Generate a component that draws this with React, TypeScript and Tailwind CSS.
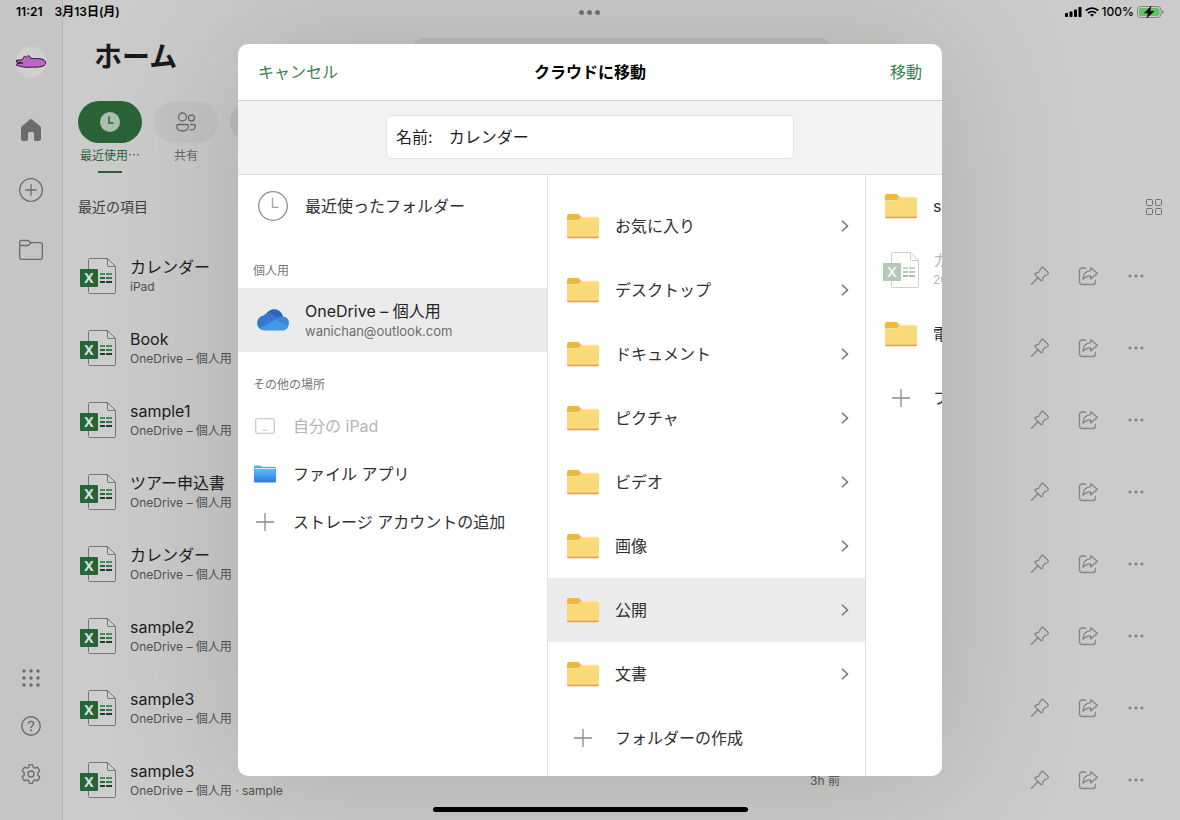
import React, { useState } from "react";

interface FileItem {
  id: number;
  name: string;
  place: string;
  time?: string;
}

const files: FileItem[] = [
  { id: 1, name: "カレンダー", place: "iPad" },
  { id: 2, name: "Book", place: "OneDrive – 個人用" },
  { id: 3, name: "sample1", place: "OneDrive – 個人用" },
  { id: 4, name: "ツアー申込書", place: "OneDrive – 個人用" },
  { id: 5, name: "カレンダー", place: "OneDrive – 個人用" },
  { id: 6, name: "sample2", place: "OneDrive – 個人用" },
  { id: 7, name: "sample3", place: "OneDrive – 個人用" },
  { id: 8, name: "sample3", place: "OneDrive – 個人用 · sample", time: "3h 前" },
];

const folders = [
  "お気に入り",
  "デスクトップ",
  "ドキュメント",
  "ピクチャ",
  "ビデオ",
  "画像",
  "公開",
  "文書",
];

const ExcelIcon = () => (
  <svg className="h-9 w-9 shrink-0" viewBox="0 0 36 36" fill="none">
    <path
      d="M9.5 .5H27.5L35.500 8.500V34.500a1 1 0 0 1-1 1H9.500a1 1 0 0 1-1-1V1.500a1 1 0 0 1 1-1Z"
      fill="#fff"
      fillOpacity=".06"
      stroke="#757575"
    />
    <path d="M27.500 .5V7.500a1 1 0 0 0 1 1H35.500" stroke="#757575" />
    <rect y="11" width="18" height="18" rx="1" fill="#2a6337" />
    <path d="M20 15h5v2h-5zM26 15h6v2h-6z" fill="#41915b" />
    <path d="M20 19h5v2h-5z" fill="#2a6337" />
    <path d="M26 19h6v2h-6z" fill="#377a4c" />
    <path d="M20 23h5v2h-5zM26 23h6v2h-6z" fill="#1d3d27" />
    <text x="9" y="25" textAnchor="middle" className="fill-[#dbe2dd] text-[14px] font-bold font-['Open_Sans',sans-serif]">
      X
    </text>
  </svg>
);

const FolderIcon = () => (
  <svg className="h-[26px] w-8" viewBox="0 0 32 26">
    <path d="M0 2.500A1.500 1.500 0 0 1 1.500 1H11.500L15 4.200 12 8H0Z" fill="#f3b93e" />
    <path
      d="M0 7.500H10.500c1 0 1.600-.3 2.200-.9L15 4.200H30.500A1.500 1.500 0 0 1 32 5.700V23.500A1.500 1.500 0 0 1 30.500 25H1.500A1.500 1.500 0 0 1 0 23.500Z"
      fill="#f9d978"
    />
    <path
      d="M0 7.500H10.500c1 0 1.600-.3 2.200-.9L15 4.200H31"
      stroke="#fceab0"
      strokeWidth=".8"
      fill="none"
    />
    <path d="M0 23.800H32A1.500 1.500 0 0 1 30.500 25.200H1.500A1.500 1.500 0 0 1 0 23.800Z" fill="#e29a5a" />
  </svg>
);

const PlusIcon = () => (
  <svg className="h-[18px] w-[18px]" viewBox="0 0 18 18">
    <path d="M9 0V18M0 9H18" stroke="#8a8a8a" strokeWidth="1.300" />
  </svg>
);

const StatusBar = () => (
  <header className="absolute inset-x-0 top-0 z-20 grid grid-cols-3 items-center px-4 pt-1 text-xs font-semibold leading-4 text-black">
    <div className="flex gap-3">
      <span>11:21</span>
      <span>3月13日(月)</span>
    </div>
    <div className="flex justify-center gap-[3px]">
      <i className="h-[5px] w-[5px] rounded-full bg-[#6f706f]" />
      <i className="h-[5px] w-[5px] rounded-full bg-[#6f706f]" />
      <i className="h-[5px] w-[5px] rounded-full bg-[#6f706f]" />
    </div>
    <div className="flex items-center justify-end gap-[3px] font-medium">
      <svg className="h-[10px] w-[17px]" viewBox="0 0 17 10">
        <rect y="6" width="3" height="4" rx=".8" />
        <rect x="4.500" y="4.500" width="3" height="5.500" rx=".8" />
        <rect x="9" y="2.500" width="3" height="7.500" rx=".8" />
        <rect x="13.500" width="3" height="10" rx=".8" />
      </svg>
      <svg className="h-[10px] w-[14px]" viewBox="0 0 14 10" fill="none" stroke="#000" strokeWidth="1.800">
        <path d="M.7 3.600C4.300 .2 9.700 .2 13.300 3.600" />
        <path d="M3 6.100C5.300 4 8.700 4 11 6.100" />
        <path d="M7 9.800 4.900 7.700C6.100 6.700 7.900 6.700 9.100 7.700Z" fill="#000" stroke="none" />
      </svg>
      <span>100%</span>
      <svg className="h-3 w-[27px]" viewBox="0 0 27 12">
        <rect x=".5" y=".5" width="23.500" height="11" rx="3.300" fill="none" stroke="#858585" />
        <rect x="2" y="2" width="20.500" height="8" rx="2" fill="#5fc466" />
        <path d="M25.300 4v4c.9-.3 1.500-1.100 1.500-2s-.6-1.700-1.500-2Z" fill="#858585" />
        <path d="M14 .2 7.500 7H11.500L9.700 11.900 17 5.200H12.900Z" stroke="#000" strokeWidth=".5" />
      </svg>
    </div>
  </header>
);

const Sidebar = () => (
  <nav className="flex w-[63px] shrink-0 flex-col items-center border-r border-[#b3b3b3] bg-[#c5c5c5] pb-[22px] pt-[46px] text-[#6b6b6b]">
    <button type="button" aria-label="アカウント" className="mb-[22px] h-8 w-8">
      <svg className="h-8 w-8" viewBox="0 0 32 32">
        <circle cx="16" cy="16" r="15.500" fill="#cfcfcf" />
        <path
          d="M1.500 14.200 7 13.800 8.500 12.500C8 10.500 10 9.500 11.500 11.500 12.500 9 15.500 9.500 15.500 12.200 20 13.200 24 12 28 13.500 31.500 15 31.500 18.500 28 20 24 21.800 18 20.800 14 21.300 10 21.500 5 20.500 1.500 19.200L2 17.500 8 17 1.500 16Z"
          fill="#bf65c9"
          stroke="#241a26"
          strokeWidth="1"
        />
      </svg>
    </button>
    <button type="button" aria-label="ホーム" className="flex h-[60px] items-center">
      <svg className="h-6 w-6" viewBox="0 0 24 24" fill="currentColor">
        <path d="M10.900 1.400a1.700 1.700 0 0 1 2.200 0L21.200 8.200A2.500 2.500 0 0 1 22 10V20.800A2 2 0 0 1 20 23H16.800A1.800 1.800 0 0 1 15 21.200V15.500A1.500 1.500 0 0 0 13.500 14H10.500A1.500 1.500 0 0 0 9 15.500V21.200A1.800 1.800 0 0 1 7.200 23H4A2 2 0 0 1 2 20.800V10A2.500 2.500 0 0 1 2.800 8.200Z" />
      </svg>
    </button>
    <button type="button" aria-label="新規" className="flex h-[60px] items-center">
      <svg className="h-6 w-6" viewBox="0 0 24 24" fill="none" stroke="currentColor" strokeWidth="1.300">
        <circle cx="12" cy="12" r="11.300" />
        <path d="M12 6.300V17.700M6.300 12H17.700" />
      </svg>
    </button>
    <button type="button" aria-label="開く" className="flex h-[60px] items-center">
      <svg className="h-6 w-6" viewBox="0 0 24 24" fill="none" stroke="currentColor" strokeWidth="1.300">
        <path d="M.7 4A1.500 1.500 0 0 1 2.200 2.500H8.300C9 2.500 9.500 2.700 10 3.100L11.800 4.700H21.800A1.500 1.500 0 0 1 23.300 6.200V19.800A1.500 1.500 0 0 1 21.800 21.300H2.200A1.500 1.500 0 0 1 .7 19.800Z" />
        <path d="M.7 7.500H8.300C9 7.500 9.600 7.200 10 6.800L12 4.700" />
      </svg>
    </button>
    <button type="button" aria-label="アプリ" className="mt-auto flex h-12 items-center">
      <svg className="h-5 w-5" viewBox="0 0 20 20" fill="currentColor">
        {[3, 10, 17].map((y) => [3, 10, 17].map((x) => <circle key={`${x}-${y}`} cx={x} cy={y} r="1.700" />))}
      </svg>
    </button>
    <button type="button" aria-label="ヘルプ" className="flex h-12 items-center">
      <svg className="h-5 w-5" viewBox="0 0 20 20" fill="none" stroke="currentColor" strokeWidth="1.400">
        <circle cx="10" cy="10" r="9.200" />
        <path d="M7.500 7.800C7.500 4.500 12.600 4.500 12.600 7.800 12.600 9.700 10 9.800 10 12" />
        <circle cx="10" cy="14.300" r="1" fill="currentColor" stroke="none" />
      </svg>
    </button>
    <button type="button" aria-label="設定" className="flex h-12 items-center">
      <svg className="h-5 w-5" viewBox="0 0 20 20" fill="none" stroke="currentColor" strokeWidth="1.300" strokeLinejoin="round">
        <path d="M8.200 .9Q10 .5 11.800 .9L12.300 3.300Q13.200 4 14.200 4.200L16.400 3.200Q18 4.700 18.700 7L16.900 8.700Q16.600 10 16.900 11.300L18.700 13Q18 15.300 16.400 16.800L14.200 15.800Q13.200 16 12.300 16.700L11.800 19.100Q10 19.500 8.200 19.100L7.700 16.700Q6.800 16 5.800 15.800L3.600 16.800Q2 15.300 1.300 13L3.100 11.300Q3.400 10 3.100 8.700L1.300 7Q2 4.700 3.600 3.200L5.800 4.200Q6.800 4 7.700 3.300Z" />
        <circle cx="10" cy="10" r="3" />
      </svg>
    </button>
  </nav>
);

const FileRow = ({ file }: { file: FileItem }) => (
  <li className="flex h-[72px] items-center pl-[17px] pr-[34px]">
    <ExcelIcon />
    <div className="ml-[14px] flex-1 pt-[2px]">
      <div className="text-base leading-5 text-[#1d1d1d]">{file.name}</div>
      <div className="text-xs leading-5 text-[#515151]">{file.place}</div>
    </div>
    {file.time && <time className="mr-[190px] pt-[2px] text-xs text-[#555]">{file.time}</time>}
    <div className="flex gap-7 text-[#868686]">
      <button type="button" aria-label="ピン留め">
        <svg className="h-5 w-5" viewBox="0 0 20 20" fill="none" stroke="currentColor" strokeWidth="1.300" strokeLinejoin="round" strokeLinecap="round">
          <path d="M11.200 1.900Q12.200 .8 13.300 1.700L18 6.400Q18.800 7.600 17.700 8.300L13.500 10.700 12.300 14.300Q11.700 15.200 10.900 14.500L5.100 8.800Q4.500 7.800 5.400 7.400L9 6Z" />
          <path d="M8 11.800 1.200 18.600" />
        </svg>
      </button>
      <button type="button" aria-label="共有">
        <svg className="h-5 w-5" viewBox="0 0 20 20" fill="none" stroke="currentColor" strokeWidth="1.300" strokeLinejoin="round" strokeLinecap="round">
          <path d="M7.500 2H4.200A2.700 2.700 0 0 0 1.500 4.700V15.800A2.700 2.700 0 0 0 4.200 18.500H14.800A2.700 2.700 0 0 0 17.500 15.800V14.500" />
          <path d="M12.700 1.500 19.300 7.300 12.700 13V9.900C9.300 9.900 7.300 10.900 5 13.200 5.200 8.200 8 4.900 12.700 4.600Z" />
        </svg>
      </button>
      <button type="button" aria-label="その他">
        <svg className="h-5 w-5" viewBox="0 0 20 20" fill="currentColor">
          <circle cx="4" cy="10" r="1.600" />
          <circle cx="10" cy="10" r="1.600" />
          <circle cx="16" cy="10" r="1.600" />
        </svg>
      </button>
    </div>
  </li>
);

const Home = () => (
  <main className="min-w-0 flex-1">
    <div className="grid grid-cols-[1fr_422px_1fr] pt-9">
      <h1 className="pl-[31px] pt-px text-[28px] font-bold leading-10 text-[#1a1a1a]">ホーム</h1>
      <input
        type="search"
        aria-label="検索"
        className="mt-[2px] h-9 rounded-[14px] bg-[#bebebd]"
      />
    </div>
    <div className="mt-6 flex gap-3 pl-[15px] text-center text-xs leading-4">
      <button type="button" className="flex w-16 flex-col items-center text-[#2a6337]">
        <span className="flex h-[42px] w-16 items-center justify-center rounded-full bg-[#2a6337]">
          <svg className="h-5 w-5" viewBox="0 0 20 20">
            <circle cx="10" cy="10" r="10" fill="#acbfb0" />
            <path d="M9 4.500V11H13.500" fill="none" stroke="#2a6337" strokeWidth="1.500" />
          </svg>
        </span>
        <span className="mt-[5px] whitespace-nowrap">最近使用⋯</span>
        <span className="mt-[7px] h-[2px] w-6 bg-[#2a6337]" />
      </button>
      <button type="button" className="flex w-16 flex-col items-center text-[#666]">
        <span className="flex h-[42px] w-16 items-center justify-center rounded-full bg-[#c3c3c3]">
          <svg className="h-5 w-5" viewBox="0 0 20 20" fill="none" stroke="#6b6b6b" strokeWidth="1.300">
            <circle cx="6.500" cy="5" r="4" />
            <circle cx="15.500" cy="6" r="3" />
            <path d="M2 12.500H11A1.300 1.300 0 0 1 12.300 13.800C12.300 17.300 10 19 6.500 19S.7 17.300 .7 13.800A1.300 1.300 0 0 1 2 12.500Z" />
            <path d="M14 12.500H18A1.300 1.300 0 0 1 19.300 13.800C19.300 17 17 18.300 13.800 17.700" />
          </svg>
        </span>
        <span className="mt-[5px]">共有</span>
      </button>
      <span className="h-[42px] w-16 rounded-full bg-[#bebebe]" />
    </div>
    <div className="mt-6 flex items-center justify-between pl-[15px] pr-[18px]">
      <h2 className="text-sm leading-5 text-[#3f3f3f]">最近の項目</h2>
      <button type="button" aria-label="グリッド表示">
        <svg className="h-4 w-4" viewBox="0 0 16 16" fill="none" stroke="#6f6f6f">
          <rect x=".5" y=".5" width="6" height="6" rx="1" />
          <rect x="9.500" y=".5" width="6" height="6" rx="1" />
          <rect x=".5" y="9.500" width="6" height="6" rx="1" />
          <rect x="9.500" y="9.500" width="6" height="6" rx="1" />
        </svg>
      </button>
    </div>
    <ul className="mt-[23px]">
      {files.map((file) => (
        <FileRow key={file.id} file={file} />
      ))}
    </ul>
  </main>
);

const Places = () => (
  <section className="w-[310px] shrink-0 border-r border-[#dedede] text-base text-[#303030]">
    <button type="button" className="flex h-[62px] w-full items-center gap-[14px] pl-[17px]">
      <span className="flex w-9 justify-center">
        <svg className="h-[30px] w-[30px]" viewBox="0 0 30 30" fill="none" stroke="#8c8c8c" strokeWidth="1.300">
          <circle cx="15" cy="15" r="14.300" />
          <path d="M14.500 6.500V16.300H20.500" stroke="#a3a3a3" />
        </svg>
      </span>
      最近使ったフォルダー
    </button>
    <h3 className="mt-6 pl-[15px] text-xs leading-5 text-[#757575]">個人用</h3>
    <button type="button" className="mt-[7px] flex h-16 w-full items-center gap-[14px] bg-[#ebebeb] pl-[17px] text-left">
      <span className="flex w-9 justify-center">
        <svg className="h-[22px] w-8" viewBox="0 0 32 22">
          <path d="M9 5C14-2.500 24-.5 26 7.500L20 13 8 10Z" fill="#2c64bd" />
          <path d="M6.500 6.500C9.500 3.500 14 3.500 17 6.500L22 9.500 3 20C-1.500 17-1 8 6.500 6.500Z" fill="#347bd0" />
          <path d="M17.500 10.500 21 8.500C30 4.500 34 13 31 17.500L26 18Z" fill="#3d88d9" />
          <path d="M2.500 19.500 18.500 10.800 31.300 17.500C30.300 20 28 21.500 25.500 21.500H7.500C5.500 21.500 3.700 20.700 2.500 19.500Z" fill="#4398e4" />
        </svg>
      </span>
      <span className="pt-[2px]">
        <span className="block leading-5 text-[#242424]">OneDrive – 個人用</span>
        <span className="block text-[13px] leading-5 text-[#6e6e6e]">wanichan@outlook.com</span>
      </span>
    </button>
    <h3 className="mt-[23px] pl-[15px] text-xs leading-5 text-[#757575]">その他の場所</h3>
    <button type="button" disabled className="mt-[7px] flex h-12 w-full items-center gap-[17px] pl-4 text-[#b5b5b5]">
      <svg className="h-4 w-[22px]" viewBox="0 0 22 16" fill="none" stroke="#cbcbcb" strokeWidth="1.300">
        <rect x="1.700" y=".7" width="18.600" height="14.600" rx="1.500" />
        <path d="M8.500 12.200H13.500" />
      </svg>
      自分の iPad
    </button>
    <button type="button" className="flex h-12 w-full items-center gap-[17px] pl-4">
      <svg className="h-[18px] w-[22px]" viewBox="0 0 22 18">
        <defs>
          <linearGradient id="files" x2="0" y2="1">
            <stop stopColor="#5abdf8" />
            <stop offset="1" stopColor="#3274e7" />
          </linearGradient>
        </defs>
        <path d="M0 2A1.500 1.500 0 0 1 1.500 .5H6L8 1.800H20.500A1.500 1.500 0 0 1 22 3.300V7H0Z" fill="#4bacee" />
        <path d="M0 4H22V16A1.500 1.500 0 0 1 20.500 17.500H1.500A1.500 1.500 0 0 1 0 16Z" fill="url(#files)" />
        <path d="M1 3.500H21" stroke="#d8f0ff" />
      </svg>
      ファイル アプリ
    </button>
    <button type="button" className="flex h-12 w-full items-center gap-[17px] pl-4">
      <span className="flex w-[22px] justify-center">
        <PlusIcon />
      </span>
      ストレージ アカウントの追加
    </button>
  </section>
);

interface EntryProps {
  icon: React.ReactNode;
  label: string;
  detail?: string;
  selected?: boolean;
  chevron?: boolean;
  disabled?: boolean;
  onClick?: () => void;
}

const Entry = ({ icon, label, detail, selected, chevron, disabled, onClick }: EntryProps) => (
  <button
    type="button"
    disabled={disabled}
    onClick={onClick}
    className={`flex h-16 w-full items-center gap-[14px] whitespace-nowrap pl-[17px] pr-4 text-left text-base text-[#303030] ${
      selected ? "bg-[#ebebeb]" : ""
    } ${disabled ? "opacity-35" : ""}`}
  >
    <span className="flex w-9 shrink-0 justify-center">{icon}</span>
    <span className="flex-1">
      <span className="block leading-5">{label}</span>
      {detail && <span className="block text-xs leading-5">{detail}</span>}
    </span>
    {chevron && (
      <svg className="h-3 w-2" viewBox="0 0 8 12" fill="none" stroke="#757575" strokeWidth="1.500">
        <path d="M1 .8 6.500 6 1 11.200" />
      </svg>
    )}
  </button>
);

const MoveDialog = () => {
  const [name, setName] = useState("カレンダー");
  const [selected, setSelected] = useState("公開");

  return (
    <div
      role="dialog"
      aria-labelledby="move-title"
      className="flex w-full max-w-[704px] flex-col overflow-hidden rounded-[10px] bg-white shadow-[0_0_140px_rgba(40,50,35,0.20)]"
    >
      <div className="grid h-[57px] shrink-0 grid-cols-3 items-center border-b border-[#cdcdcd] px-5 text-base">
        <button type="button" className="justify-self-start text-[#38834f]">
          キャンセル
        </button>
        <h2 id="move-title" className="text-center font-bold text-black">
          クラウドに移動
        </h2>
        <button type="button" className="justify-self-end text-[#38834f]">
          移動
        </button>
      </div>
      <div className="flex shrink-0 justify-center border-b border-[#dadada] bg-[#f3f3f3] pb-[15px] pt-[14px]">
        <div className="flex h-11 w-[408px] items-center gap-4 rounded-[5px] border border-[#e2e2e2] bg-white px-[9px] text-base text-[#1f1f1f]">
          <label htmlFor="file-name">名前:</label>
          <input
            id="file-name"
            className="min-w-0 flex-1 outline-none"
            value={name}
            onChange={(e) => setName(e.target.value)}
          />
        </div>
      </div>
      <div className="flex min-h-0 flex-1 overflow-hidden">
        <Places />
        <section className="w-[318px] shrink-0 border-r border-[#dedede] pt-[19px]">
          {folders.map((folder) => (
            <Entry
              key={folder}
              icon={<FolderIcon />}
              label={folder}
              selected={folder === selected}
              chevron
              onClick={() => setSelected(folder)}
            />
          ))}
          <Entry icon={<PlusIcon />} label="フォルダーの作成" />
        </section>
        {/* this column runs past the dialog edge */}
        <section className="-mt-px min-w-0 flex-1 overflow-hidden">
          <Entry icon={<FolderIcon />} label="sample" />
          <Entry icon={<ExcelIcon />} label="カレンダー" detail="2023" disabled />
          <Entry icon={<FolderIcon />} label="電" />
          <Entry icon={<PlusIcon />} label="フォルダーの作成" />
        </section>
      </div>
    </div>
  );
};

const App: React.FC = () => {
  return (
    <div className="relative flex h-screen overflow-hidden bg-[#cbcbcb] font-['Inter','Noto_Sans_CJK_JP',sans-serif]">
      <StatusBar />
      <Sidebar />
      <Home />
      <div className="absolute inset-0 z-10 flex justify-center py-11">
        <MoveDialog />
      </div>
      {/* home indicator */}
      <div className="absolute inset-x-0 bottom-2 z-20 flex justify-center">
        <div className="h-[5px] w-[315px] rounded-full bg-black" />
      </div>
    </div>
  );
};

export default App;
